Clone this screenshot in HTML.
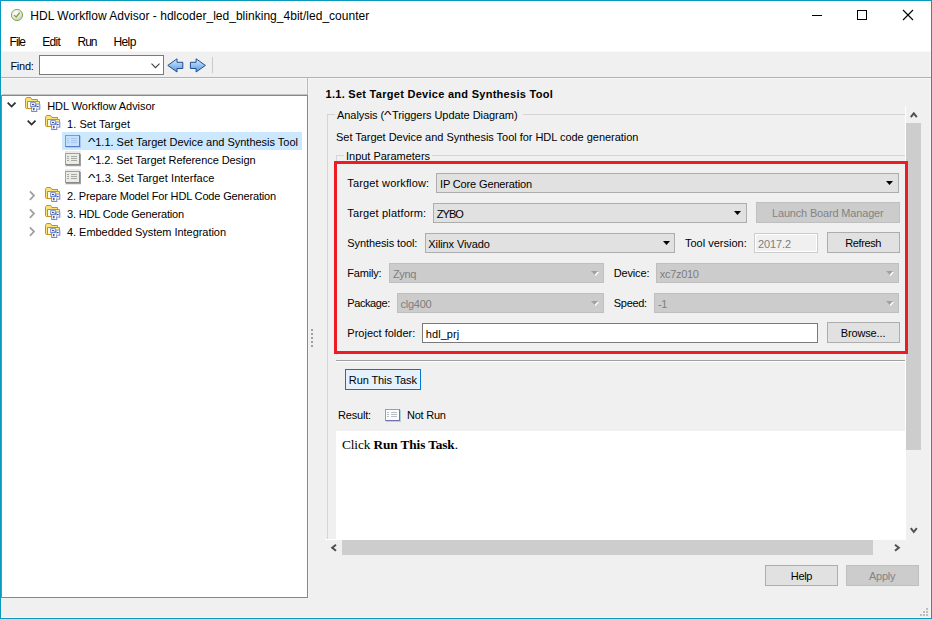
<!DOCTYPE html>
<html><head><meta charset="utf-8"><title>HDL Workflow Advisor</title>
<style>
html,body{margin:0;padding:0}
body{width:932px;height:619px;position:relative;overflow:hidden;background:#f0f0f0;font-family:'Liberation Sans',sans-serif;font-size:11px;color:#000}
.a{position:absolute;box-sizing:border-box}
.t{position:absolute;white-space:pre;line-height:16px;height:16px}
.cb{position:absolute;box-sizing:border-box;background:#e1e1e1;border:1px solid #adadad}
.cbd{position:absolute;box-sizing:border-box;background:#cccccc;border:1px solid #bfbfbf}
.btn{position:absolute;box-sizing:border-box;background:#e1e1e1;border:1px solid #adadad}
.btnd{position:absolute;box-sizing:border-box;background:#cccccc;border:1px solid #bfbfbf}
.le{position:absolute;box-sizing:border-box;background:#fff;border:1px solid #7a7a7a}
svg{position:absolute;overflow:visible}

</style></head>
<body>
<!-- window chrome -->
<div class="a" style="left:1px;top:1px;width:930px;height:50px;background:#fff"></div>
<div class="a" style="left:1px;top:51px;width:930px;height:1px;background:#f8f8f8"></div>
<div class="a" style="left:0;top:0;width:932px;height:619px;border:1px solid #0899bd;z-index:50"></div>
<div class="a" style="left:1px;top:52px;width:930px;height:566px;border:1px solid #f8f7f7;border-top:none"></div>
<!-- title icon -->
<svg style="left:10px;top:8px" width="14" height="14" viewBox="0 0 14 14">
 <defs><radialGradient id="tg" cx="0.4" cy="0.35" r="0.75"><stop offset="0" stop-color="#ffffff"/><stop offset="0.55" stop-color="#e6e6e6"/><stop offset="1" stop-color="#b4b4b4"/></radialGradient></defs>
 <circle cx="7" cy="7" r="5.6" fill="url(#tg)" stroke="#8aac50" stroke-width="1"/>
 <path d="M4.4 7.4 L6.2 9 L9.4 5" fill="none" stroke="#7fa62c" stroke-width="1.25" stroke-linecap="round" stroke-linejoin="round"/>
</svg>
<!-- window controls -->
<div class="a" style="left:812px;top:15px;width:10px;height:1px;background:#000"></div>
<div class="a" style="left:857px;top:10px;width:10px;height:10px;border:1px solid #000"></div>
<svg style="left:903px;top:10px" width="10" height="10" viewBox="0 0 10 10"><path d="M0 0 L10 10 M10 0 L0 10" stroke="#000" stroke-width="1.1" fill="none"/></svg>

<!-- toolbar -->
<div class="le" style="left:39px;top:55px;width:125px;height:20px"></div>
<svg style="left:151px;top:63px" width="9" height="6" viewBox="0 0 9 6"><path d="M0.5 0.7 L4.5 4.7 L8.5 0.7" fill="none" stroke="#404040" stroke-width="1.1"/></svg>
<svg style="left:166.5px;top:57.5px" width="17" height="15" viewBox="0 0 17 15">
 <defs><linearGradient id="ag" x1="0" y1="0" x2="0" y2="1"><stop offset="0" stop-color="#dcecfc"/><stop offset="0.45" stop-color="#9cc6f2"/><stop offset="1" stop-color="#5894dc"/></linearGradient></defs>
 <path d="M0.8 7.4 L10 0.8 L10 4.3 L15.8 4.3 L15.8 10.5 L10 10.5 L10 14 Z" fill="url(#ag)" stroke="#1f4f8f" stroke-width="1" stroke-linejoin="round"/>
</svg>
<svg style="left:189.3px;top:57.5px" width="17" height="15" viewBox="0 0 17 15">
 <path d="M16.4 7.4 L7.1 0.8 L7.1 4.3 L1.4 4.3 L1.4 10.5 L7.1 10.5 L7.1 14 Z" fill="url(#ag)" stroke="#1f4f8f" stroke-width="1" stroke-linejoin="round"/>
</svg>
<div class="a" style="left:212px;top:57px;width:1px;height:16px;background:#c9c9c9"></div>
<div class="a" style="left:1px;top:77px;width:930px;height:1px;background:#b2b2b2"></div>
<div class="a" style="left:1px;top:78px;width:930px;height:1px;background:#f7f7f7"></div>
<div class="a" style="left:307px;top:77px;width:1px;height:19px;background:#b8b8b8"></div>
<div class="a" style="left:2px;top:94px;width:305px;height:1px;background:#c4c4c4"></div>
<div class="a" style="left:306px;top:78px;width:1px;height:16px;background:#f5f5f5"></div>
<div class="a" style="left:308px;top:78px;width:1px;height:520px;background:#f5f5f5"></div>

<!-- tree -->
<div class="a" style="left:1px;top:95px;width:307px;height:503px;background:#fff;border:1px solid #828790"></div>
<div class="a" style="left:62px;top:132px;width:240px;height:18px;background:#cce8ff"></div>
<!-- tree chevrons -->
<svg style="left:7px;top:102px" width="10" height="6" viewBox="0 0 10 6"><path d="M0.7 0.7 L4.6 4.6 L8.5 0.7" fill="none" stroke="#303030" stroke-width="1.8"/></svg>
<svg style="left:27px;top:120px" width="10" height="6" viewBox="0 0 10 6"><path d="M0.7 0.7 L4.6 4.6 L8.5 0.7" fill="none" stroke="#303030" stroke-width="1.8"/></svg>
<svg style="left:29px;top:191px" width="6" height="10" viewBox="0 0 6 10"><path d="M0.9 0.4 L5 4.6 L0.9 8.8" fill="none" stroke="#9e9e9e" stroke-width="1.7"/></svg>
<svg style="left:29px;top:209px" width="6" height="10" viewBox="0 0 6 10"><path d="M0.9 0.4 L5 4.6 L0.9 8.8" fill="none" stroke="#9e9e9e" stroke-width="1.7"/></svg>
<svg style="left:29px;top:227px" width="6" height="10" viewBox="0 0 6 10"><path d="M0.9 0.4 L5 4.6 L0.9 8.8" fill="none" stroke="#9e9e9e" stroke-width="1.7"/></svg>
<svg style="left:25px;top:97px" width="16" height="16" viewBox="0 0 16 16">
 <defs><linearGradient id="fga" x1="0" y1="0" x2="1" y2="1"><stop offset="0" stop-color="#fffbe0"/><stop offset="0.5" stop-color="#fdeb8e"/><stop offset="1" stop-color="#f7d560"/></linearGradient></defs>
 <path d="M0.5 2.2 L1.7 0.5 L5.6 0.5 L6.8 2.5 L12.5 2.5 L12.5 4.5 L2.5 4.5 L2.5 11.5 L1.2 11.5 L0.5 10.6 Z" fill="#fbe27a" stroke="#c8901c" stroke-width="1" stroke-linejoin="round"/>
 <path d="M2.5 4.5 L14.5 4.5 L14.5 11.5 L2.5 11.5 Z" fill="url(#fga)" stroke="#c8901c" stroke-width="1" stroke-linejoin="round"/>
 <rect x="3.2" y="5.3" width="2" height="5.6" fill="#fffef0" opacity="0.9"/>
 <rect x="5.2" y="5.2" width="5.6" height="4.8" fill="#6f90dc"/>
 <rect x="10.6" y="6.6" width="4.6" height="6" fill="#7f96d6"/>
 <rect x="6.2" y="9.2" width="6" height="5.8" fill="#6f8cd4"/>
 <rect x="14.2" y="7.6" width="1" height="5" fill="#8686b6"/>
 <rect x="7" y="14" width="5.2" height="1" fill="#8686b6"/>
 <rect x="6.2" y="6.2" width="3.8" height="2.8" fill="#fff"/>
 <rect x="11.4" y="7.6" width="2.8" height="4" fill="#fff"/>
 <rect x="7.2" y="10.1" width="4" height="3.9" fill="#fff"/>
 <rect x="7.2" y="7" width="1.5" height="1.1" fill="#15157a"/>
 <rect x="12.2" y="9" width="1.3" height="1.1" fill="#15157a"/>
 <rect x="8.3" y="10.9" width="1.1" height="2.4" fill="#15157a"/>
 <path d="M8.7 7.9 L12.2 9.3" stroke="#4a62b8" stroke-width="0.7"/>
</svg>
<svg style="left:45px;top:115px" width="16" height="16" viewBox="0 0 16 16">
 <defs><linearGradient id="fgb" x1="0" y1="0" x2="1" y2="1"><stop offset="0" stop-color="#fffbe0"/><stop offset="0.5" stop-color="#fdeb8e"/><stop offset="1" stop-color="#f7d560"/></linearGradient></defs>
 <path d="M0.5 2.2 L1.7 0.5 L5.6 0.5 L6.8 2.5 L12.5 2.5 L12.5 4.5 L2.5 4.5 L2.5 11.5 L1.2 11.5 L0.5 10.6 Z" fill="#fbe27a" stroke="#c8901c" stroke-width="1" stroke-linejoin="round"/>
 <path d="M2.5 4.5 L14.5 4.5 L14.5 11.5 L2.5 11.5 Z" fill="url(#fgb)" stroke="#c8901c" stroke-width="1" stroke-linejoin="round"/>
 <rect x="3.2" y="5.3" width="2" height="5.6" fill="#fffef0" opacity="0.9"/>
 <rect x="5.2" y="5.2" width="5.6" height="4.8" fill="#6f90dc"/>
 <rect x="10.6" y="6.6" width="4.6" height="6" fill="#7f96d6"/>
 <rect x="6.2" y="9.2" width="6" height="5.8" fill="#6f8cd4"/>
 <rect x="14.2" y="7.6" width="1" height="5" fill="#8686b6"/>
 <rect x="7" y="14" width="5.2" height="1" fill="#8686b6"/>
 <rect x="6.2" y="6.2" width="3.8" height="2.8" fill="#fff"/>
 <rect x="11.4" y="7.6" width="2.8" height="4" fill="#fff"/>
 <rect x="7.2" y="10.1" width="4" height="3.9" fill="#fff"/>
 <rect x="7.2" y="7" width="1.5" height="1.1" fill="#15157a"/>
 <rect x="12.2" y="9" width="1.3" height="1.1" fill="#15157a"/>
 <rect x="8.3" y="10.9" width="1.1" height="2.4" fill="#15157a"/>
 <path d="M8.7 7.9 L12.2 9.3" stroke="#4a62b8" stroke-width="0.7"/>
</svg>
<svg style="left:45px;top:187px" width="16" height="16" viewBox="0 0 16 16">
 <defs><linearGradient id="fgc" x1="0" y1="0" x2="1" y2="1"><stop offset="0" stop-color="#fffbe0"/><stop offset="0.5" stop-color="#fdeb8e"/><stop offset="1" stop-color="#f7d560"/></linearGradient></defs>
 <path d="M0.5 2.2 L1.7 0.5 L5.6 0.5 L6.8 2.5 L12.5 2.5 L12.5 4.5 L2.5 4.5 L2.5 11.5 L1.2 11.5 L0.5 10.6 Z" fill="#fbe27a" stroke="#c8901c" stroke-width="1" stroke-linejoin="round"/>
 <path d="M2.5 4.5 L14.5 4.5 L14.5 11.5 L2.5 11.5 Z" fill="url(#fgc)" stroke="#c8901c" stroke-width="1" stroke-linejoin="round"/>
 <rect x="3.2" y="5.3" width="2" height="5.6" fill="#fffef0" opacity="0.9"/>
 <rect x="5.2" y="5.2" width="5.6" height="4.8" fill="#6f90dc"/>
 <rect x="10.6" y="6.6" width="4.6" height="6" fill="#7f96d6"/>
 <rect x="6.2" y="9.2" width="6" height="5.8" fill="#6f8cd4"/>
 <rect x="14.2" y="7.6" width="1" height="5" fill="#8686b6"/>
 <rect x="7" y="14" width="5.2" height="1" fill="#8686b6"/>
 <rect x="6.2" y="6.2" width="3.8" height="2.8" fill="#fff"/>
 <rect x="11.4" y="7.6" width="2.8" height="4" fill="#fff"/>
 <rect x="7.2" y="10.1" width="4" height="3.9" fill="#fff"/>
 <rect x="7.2" y="7" width="1.5" height="1.1" fill="#15157a"/>
 <rect x="12.2" y="9" width="1.3" height="1.1" fill="#15157a"/>
 <rect x="8.3" y="10.9" width="1.1" height="2.4" fill="#15157a"/>
 <path d="M8.7 7.9 L12.2 9.3" stroke="#4a62b8" stroke-width="0.7"/>
</svg>
<svg style="left:45px;top:205px" width="16" height="16" viewBox="0 0 16 16">
 <defs><linearGradient id="fgd" x1="0" y1="0" x2="1" y2="1"><stop offset="0" stop-color="#fffbe0"/><stop offset="0.5" stop-color="#fdeb8e"/><stop offset="1" stop-color="#f7d560"/></linearGradient></defs>
 <path d="M0.5 2.2 L1.7 0.5 L5.6 0.5 L6.8 2.5 L12.5 2.5 L12.5 4.5 L2.5 4.5 L2.5 11.5 L1.2 11.5 L0.5 10.6 Z" fill="#fbe27a" stroke="#c8901c" stroke-width="1" stroke-linejoin="round"/>
 <path d="M2.5 4.5 L14.5 4.5 L14.5 11.5 L2.5 11.5 Z" fill="url(#fgd)" stroke="#c8901c" stroke-width="1" stroke-linejoin="round"/>
 <rect x="3.2" y="5.3" width="2" height="5.6" fill="#fffef0" opacity="0.9"/>
 <rect x="5.2" y="5.2" width="5.6" height="4.8" fill="#6f90dc"/>
 <rect x="10.6" y="6.6" width="4.6" height="6" fill="#7f96d6"/>
 <rect x="6.2" y="9.2" width="6" height="5.8" fill="#6f8cd4"/>
 <rect x="14.2" y="7.6" width="1" height="5" fill="#8686b6"/>
 <rect x="7" y="14" width="5.2" height="1" fill="#8686b6"/>
 <rect x="6.2" y="6.2" width="3.8" height="2.8" fill="#fff"/>
 <rect x="11.4" y="7.6" width="2.8" height="4" fill="#fff"/>
 <rect x="7.2" y="10.1" width="4" height="3.9" fill="#fff"/>
 <rect x="7.2" y="7" width="1.5" height="1.1" fill="#15157a"/>
 <rect x="12.2" y="9" width="1.3" height="1.1" fill="#15157a"/>
 <rect x="8.3" y="10.9" width="1.1" height="2.4" fill="#15157a"/>
 <path d="M8.7 7.9 L12.2 9.3" stroke="#4a62b8" stroke-width="0.7"/>
</svg>
<svg style="left:45px;top:223px" width="16" height="16" viewBox="0 0 16 16">
 <defs><linearGradient id="fge" x1="0" y1="0" x2="1" y2="1"><stop offset="0" stop-color="#fffbe0"/><stop offset="0.5" stop-color="#fdeb8e"/><stop offset="1" stop-color="#f7d560"/></linearGradient></defs>
 <path d="M0.5 2.2 L1.7 0.5 L5.6 0.5 L6.8 2.5 L12.5 2.5 L12.5 4.5 L2.5 4.5 L2.5 11.5 L1.2 11.5 L0.5 10.6 Z" fill="#fbe27a" stroke="#c8901c" stroke-width="1" stroke-linejoin="round"/>
 <path d="M2.5 4.5 L14.5 4.5 L14.5 11.5 L2.5 11.5 Z" fill="url(#fge)" stroke="#c8901c" stroke-width="1" stroke-linejoin="round"/>
 <rect x="3.2" y="5.3" width="2" height="5.6" fill="#fffef0" opacity="0.9"/>
 <rect x="5.2" y="5.2" width="5.6" height="4.8" fill="#6f90dc"/>
 <rect x="10.6" y="6.6" width="4.6" height="6" fill="#7f96d6"/>
 <rect x="6.2" y="9.2" width="6" height="5.8" fill="#6f8cd4"/>
 <rect x="14.2" y="7.6" width="1" height="5" fill="#8686b6"/>
 <rect x="7" y="14" width="5.2" height="1" fill="#8686b6"/>
 <rect x="6.2" y="6.2" width="3.8" height="2.8" fill="#fff"/>
 <rect x="11.4" y="7.6" width="2.8" height="4" fill="#fff"/>
 <rect x="7.2" y="10.1" width="4" height="3.9" fill="#fff"/>
 <rect x="7.2" y="7" width="1.5" height="1.1" fill="#15157a"/>
 <rect x="12.2" y="9" width="1.3" height="1.1" fill="#15157a"/>
 <rect x="8.3" y="10.9" width="1.1" height="2.4" fill="#15157a"/>
 <path d="M8.7 7.9 L12.2 9.3" stroke="#4a62b8" stroke-width="0.7"/>
</svg>
<svg style="left:65px;top:133px" width="17" height="16" viewBox="0 0 17 16"><rect x="1" y="3" width="15" height="12" fill="#a9c9ea"/>
<rect x="0" y="2" width="15" height="12" fill="#5a7cc4"/>
<path d="M0 2 H15 L14 3 V13 H1 L0 14 Z" fill="#68a0e2"/>
<rect x="1" y="3" width="13" height="10" fill="#c6e0fc"/>
<g fill="#a6c8ee"><rect x="2" y="5" width="2" height="1"/><rect x="6" y="5" width="6" height="1"/><rect x="2" y="7" width="2" height="1"/><rect x="6" y="7" width="6" height="1"/><rect x="2" y="9" width="2" height="1"/><rect x="6" y="9" width="6" height="1"/></g>
</svg>
<svg style="left:65px;top:151px" width="17" height="16" viewBox="0 0 17 16"><rect x="0" y="0" width="16" height="16" fill="#e9e9e9"/><rect x="1" y="3" width="15" height="12" fill="#a0a0a0"/>
<rect x="0" y="2" width="15" height="12" fill="#8a8a8a"/>
<path d="M0 2 H15 L14 3 V13 H1 L0 14 Z" fill="#a2a87c"/>
<rect x="1" y="3" width="13" height="10" fill="#ecece2"/>
<g fill="#a8a8a8"><rect x="2" y="5" width="2" height="1"/><rect x="6" y="5" width="6" height="1"/><rect x="2" y="7" width="2" height="1"/><rect x="6" y="7" width="6" height="1"/><rect x="2" y="9" width="2" height="1"/><rect x="6" y="9" width="6" height="1"/></g>
</svg>
<svg style="left:65px;top:169px" width="17" height="16" viewBox="0 0 17 16"><rect x="0" y="0" width="16" height="16" fill="#e9e9e9"/><rect x="1" y="3" width="15" height="12" fill="#a0a0a0"/>
<rect x="0" y="2" width="15" height="12" fill="#8a8a8a"/>
<path d="M0 2 H15 L14 3 V13 H1 L0 14 Z" fill="#a2a87c"/>
<rect x="1" y="3" width="13" height="10" fill="#ecece2"/>
<g fill="#a8a8a8"><rect x="2" y="5" width="2" height="1"/><rect x="6" y="5" width="6" height="1"/><rect x="2" y="7" width="2" height="1"/><rect x="6" y="7" width="6" height="1"/><rect x="2" y="9" width="2" height="1"/><rect x="6" y="9" width="6" height="1"/></g>
</svg>

<!-- splitter dots -->
<div class="a" style="left:311px;top:329px;width:2px;height:18px;background:repeating-linear-gradient(to bottom,#a0a0a0 0,#a0a0a0 2px,transparent 2px,transparent 4px)"></div>

<!-- right panel: groupboxes -->
<div class="a" style="left:327px;top:114px;width:578px;height:426px;border-left:1px solid #d5d5d5;border-top:1px solid #d5d5d5"></div>
<div class="a" style="left:335px;top:108px;width:188px;height:14px;background:#f0f0f0"></div>
<div class="a" style="left:336px;top:155px;width:569px;height:200px;border-left:1px solid #d5d5d5;border-top:1px solid #d5d5d5"></div>
<div class="a" style="left:344px;top:149px;width:88px;height:14px;background:#f0f0f0"></div>

<!-- form widgets -->
<div class="cb" style="left:436px;top:173px;width:463px;height:20px"></div>
<div class="cb" style="left:433px;top:203px;width:314px;height:20px"></div>
<div class="btnd" style="left:756px;top:202px;width:144px;height:21px"></div>
<div class="cb" style="left:425px;top:233px;width:250px;height:20px"></div>
<div class="a" style="left:754px;top:233px;width:64px;height:20px;background:#f0f0f0;border:1px solid #cccccc;box-shadow:inset 0 0 0 1px #fff"></div>
<div class="btn" style="left:827px;top:232px;width:73px;height:21px"></div>
<div class="cbd" style="left:389px;top:263px;width:215px;height:20px"></div>
<div class="cbd" style="left:656px;top:263px;width:243px;height:20px"></div>
<div class="cbd" style="left:397px;top:293px;width:207px;height:20px"></div>
<div class="cbd" style="left:654px;top:293px;width:245px;height:20px"></div>
<div class="le" style="left:422px;top:323px;width:396px;height:20px"></div>
<div class="btn" style="left:827px;top:322px;width:73px;height:21px"></div>
<!-- combo arrows -->
<svg style="left:886px;top:181px" width="7" height="4"><path d="M0 0 H7 L3.5 4 Z" fill="#000"/></svg>
<svg style="left:734px;top:211px" width="7" height="4"><path d="M0 0 H7 L3.5 4 Z" fill="#000"/></svg>
<svg style="left:662.5px;top:241px" width="7" height="4"><path d="M0 0 H7 L3.5 4 Z" fill="#000"/></svg>
<svg style="left:591px;top:271px" width="8" height="5"><path d="M1 1 H8 L4.5 5 Z" fill="#fff"/><path d="M0 0 H7 L3.5 4 Z" fill="#a0a0a0"/></svg>
<svg style="left:886px;top:271px" width="8" height="5"><path d="M1 1 H8 L4.5 5 Z" fill="#fff"/><path d="M0 0 H7 L3.5 4 Z" fill="#a0a0a0"/></svg>
<svg style="left:591px;top:301px" width="8" height="5"><path d="M1 1 H8 L4.5 5 Z" fill="#fff"/><path d="M0 0 H7 L3.5 4 Z" fill="#a0a0a0"/></svg>
<svg style="left:886px;top:301px" width="8" height="5"><path d="M1 1 H8 L4.5 5 Z" fill="#fff"/><path d="M0 0 H7 L3.5 4 Z" fill="#a0a0a0"/></svg>

<!-- separator -->
<div class="a" style="left:336px;top:360px;width:569px;height:1px;background:#a0a0a0"></div>
<div class="a" style="left:336px;top:361px;width:569px;height:1px;background:#fff"></div>
<!-- run button -->
<div class="a" style="left:345px;top:369px;width:76px;height:21px;background:#e5f1fb;border:1px solid #0078d7"></div>
<!-- result icon placeholder -->
<svg style="left:385px;top:407px" width="17" height="16" viewBox="0 0 17 16"><rect x="1" y="3" width="15" height="12" fill="#b4d0d8"/>
<rect x="0" y="2" width="15" height="12" fill="#7474ac"/>
<path d="M0 2 H15 L14 3 V13 H1 L0 14 Z" fill="#7ea2e6"/>
<rect x="1" y="3" width="13" height="10" fill="#fafdff"/>
<g fill="#bcbcc2"><rect x="2" y="5" width="2" height="1"/><rect x="6" y="5" width="6" height="1"/><rect x="2" y="7" width="2" height="1"/><rect x="6" y="7" width="6" height="1"/><rect x="2" y="9" width="2" height="1"/><rect x="6" y="9" width="6" height="1"/></g>
</svg>
<!-- text browser -->
<div class="a" style="left:336px;top:431px;width:570px;height:109px;background:#fff"></div>
<span class="a" style="left:342px;top:437px;font-family:'Liberation Serif',serif;font-size:13.3px;line-height:16px;white-space:pre;letter-spacing:-0.11px" id="click">Click <b>Run This Task</b>.</span>

<!-- vertical scrollbar -->
<div class="a" style="left:905px;top:106px;width:1px;height:434px;background:#fff"></div>
<div class="a" style="left:906px;top:123px;width:15px;height:327px;background:#cdcdcd"></div>
<svg style="left:910px;top:111px" width="8" height="7" viewBox="0 0 8 7"><path d="M0.8 6.2 L3.8 2.4 L6.8 6.2" fill="none" stroke="#505050" stroke-width="2"/></svg>
<svg style="left:910px;top:527px" width="8" height="7" viewBox="0 0 8 7"><path d="M0.8 1.2 L3.8 5 L6.8 1.2" fill="none" stroke="#505050" stroke-width="2"/></svg>
<!-- horizontal scrollbar -->
<div class="a" style="left:325px;top:539px;width:17px;height:1px;background:#fff"></div>
<div class="a" style="left:342px;top:540px;width:531px;height:15px;background:#cdcdcd"></div>
<svg style="left:329.5px;top:543.5px" width="7" height="8" viewBox="0 0 7 8"><path d="M6 0.8 L2.2 3.8 L6 6.8" fill="none" stroke="#505050" stroke-width="2"/></svg>
<svg style="left:893.5px;top:543.5px" width="7" height="8" viewBox="0 0 7 8"><path d="M1 0.8 L4.8 3.8 L1 6.8" fill="none" stroke="#505050" stroke-width="2"/></svg>

<!-- red annotation -->
<div class="a" style="left:334px;top:161px;width:574px;height:193px;border:3px solid #ed1c24;z-index:5"></div>

<!-- bottom buttons -->
<div class="btn" style="left:765px;top:565px;width:73px;height:21px"></div>
<div class="btnd" style="left:846px;top:565px;width:73px;height:21px"></div>
<!-- resize grip -->
<svg style="left:920px;top:608px" width="9" height="9" viewBox="0 0 9 9" shape-rendering="crispEdges">
 <g fill="#bdbdbd"><rect x="6" y="0" width="2" height="2"/><rect x="3" y="3" width="2" height="2"/><rect x="6" y="3" width="2" height="2"/><rect x="0" y="6" width="2" height="2"/><rect x="3" y="6" width="2" height="2"/><rect x="6" y="6" width="2" height="2"/></g>
</svg>

<span class="t" style="left:30.30px;top:7.54px;font-size:12px;letter-spacing:0.024px;color:#000;">HDL Workflow Advisor - hdlcoder_led_blinking_4bit/led_counter</span>
<span class="t" style="left:9.60px;top:34.14px;font-size:12px;letter-spacing:-0.961px;color:#000;">File</span>
<span class="t" style="left:42.30px;top:34.14px;font-size:12px;letter-spacing:-0.722px;color:#000;">Edit</span>
<span class="t" style="left:77.60px;top:34.14px;font-size:12px;letter-spacing:-1.105px;color:#000;">Run</span>
<span class="t" style="left:113.40px;top:34.14px;font-size:12px;letter-spacing:-0.572px;color:#000;">Help</span>
<span class="t" style="left:10.40px;top:58.13px;font-size:11px;letter-spacing:-0.254px;color:#000;">Find:</span>
<span class="t" style="left:47.20px;top:97.88px;font-size:11px;letter-spacing:-0.041px;color:#000;">HDL Workflow Advisor</span>
<span class="t" style="left:67.00px;top:115.88px;font-size:11px;letter-spacing:0.064px;color:#000;">1. Set Target</span>
<span class="t" style="left:87.50px;top:133.88px;font-size:11px;letter-spacing:-0.012px;color:#000;"><span style="display:inline-block;transform:scaleX(1.45);transform-origin:0 50%;margin-right:2.6px">^</span>1.1. Set Target Device and Synthesis Tool</span>
<span class="t" style="left:87.50px;top:151.88px;font-size:11px;letter-spacing:-0.067px;color:#000;"><span style="display:inline-block;transform:scaleX(1.45);transform-origin:0 50%;margin-right:2.6px">^</span>1.2. Set Target Reference Design</span>
<span class="t" style="left:87.50px;top:169.88px;font-size:11px;letter-spacing:0.078px;color:#000;"><span style="display:inline-block;transform:scaleX(1.45);transform-origin:0 50%;margin-right:2.6px">^</span>1.3. Set Target Interface</span>
<span class="t" style="left:67.00px;top:187.88px;font-size:11px;letter-spacing:-0.161px;color:#000;">2. Prepare Model For HDL Code Generation</span>
<span class="t" style="left:67.00px;top:205.88px;font-size:11px;letter-spacing:-0.167px;color:#000;">3. HDL Code Generation</span>
<span class="t" style="left:67.00px;top:223.88px;font-size:11px;letter-spacing:-0.041px;color:#000;">4. Embedded System Integration</span>
<span class="t" style="left:325.50px;top:85.73px;font-size:11px;letter-spacing:0.280px;color:#000;font-weight:bold;">1.1. Set Target Device and Synthesis Tool</span>
<span class="t" style="left:337.00px;top:107.33px;font-size:11px;letter-spacing:-0.049px;color:#000;">Analysis (<span style="display:inline-block;transform:scaleX(1.45);transform-origin:0 50%;margin-right:2.6px">^</span>Triggers Update Diagram)</span>
<span class="t" style="left:336.00px;top:129.33px;font-size:11px;letter-spacing:-0.032px;color:#000;">Set Target Device and Synthesis Tool for HDL code generation</span>
<span class="t" style="left:346.00px;top:148.33px;font-size:11px;letter-spacing:-0.023px;color:#000;">Input Parameters</span>
<span class="t" style="left:347.30px;top:175.33px;font-size:11px;letter-spacing:0.157px;color:#000;">Target workflow:</span>
<span class="t" style="left:440.00px;top:175.73px;font-size:11px;letter-spacing:-0.143px;color:#000;">IP Core Generation</span>
<span class="t" style="left:347.30px;top:205.33px;font-size:11px;letter-spacing:0.161px;color:#000;">Target platform:</span>
<span class="t" style="left:436.80px;top:205.73px;font-size:11px;letter-spacing:-0.988px;color:#000;">ZYBO</span>
<span class="t" style="left:772.00px;top:205.33px;font-size:11px;letter-spacing:-0.173px;color:#838383;">Launch Board Manager</span>
<span class="t" style="left:347.30px;top:235.33px;font-size:11px;letter-spacing:-0.103px;color:#000;">Synthesis tool:</span>
<span class="t" style="left:428.30px;top:235.73px;font-size:11px;letter-spacing:-0.099px;color:#000;">Xilinx Vivado</span>
<span class="t" style="left:685.00px;top:235.33px;font-size:11px;letter-spacing:-0.001px;color:#000;">Tool version:</span>
<span class="t" style="left:758.00px;top:235.73px;font-size:11px;letter-spacing:-0.109px;color:#7e7e7e;">2017.2</span>
<span class="t" style="left:845.30px;top:235.33px;font-size:11px;letter-spacing:-0.397px;color:#000;">Refresh</span>
<span class="t" style="left:347.30px;top:265.33px;font-size:11px;letter-spacing:-0.208px;color:#000;">Family:</span>
<span class="t" style="left:393.00px;top:265.73px;font-size:11px;letter-spacing:-0.367px;color:#7e7e7e;">Zynq</span>
<span class="t" style="left:613.80px;top:265.33px;font-size:11px;letter-spacing:-0.170px;color:#000;">Device:</span>
<span class="t" style="left:659.80px;top:265.73px;font-size:11px;letter-spacing:-0.319px;color:#7e7e7e;">xc7z010</span>
<span class="t" style="left:347.30px;top:295.33px;font-size:11px;letter-spacing:-0.422px;color:#000;">Package:</span>
<span class="t" style="left:400.50px;top:295.73px;font-size:11px;letter-spacing:-0.237px;color:#7e7e7e;">clg400</span>
<span class="t" style="left:613.80px;top:295.33px;font-size:11px;letter-spacing:-0.312px;color:#000;">Speed:</span>
<span class="t" style="left:658.00px;top:295.73px;font-size:11px;letter-spacing:-0.391px;color:#7e7e7e;">-1</span>
<span class="t" style="left:347.30px;top:325.33px;font-size:11px;letter-spacing:0.008px;color:#000;">Project folder:</span>
<span class="t" style="left:425.80px;top:325.73px;font-size:11px;letter-spacing:0.067px;color:#000;">hdl_prj</span>
<span class="t" style="left:840.80px;top:325.33px;font-size:11px;letter-spacing:-0.151px;color:#000;">Browse...</span>
<span class="t" style="left:348.80px;top:372.33px;font-size:11px;letter-spacing:-0.100px;color:#000;">Run This Task</span>
<span class="t" style="left:338.00px;top:407.33px;font-size:11px;letter-spacing:-0.179px;color:#000;">Result:</span>
<span class="t" style="left:407.00px;top:407.33px;font-size:11px;letter-spacing:-0.230px;color:#000;">Not Run</span>
<span class="t" style="left:790.80px;top:568.13px;font-size:11px;letter-spacing:-0.344px;color:#000;">Help</span>
<span class="t" style="left:869.00px;top:568.13px;font-size:11px;letter-spacing:-0.256px;color:#838383;">Apply</span>
</body></html>
